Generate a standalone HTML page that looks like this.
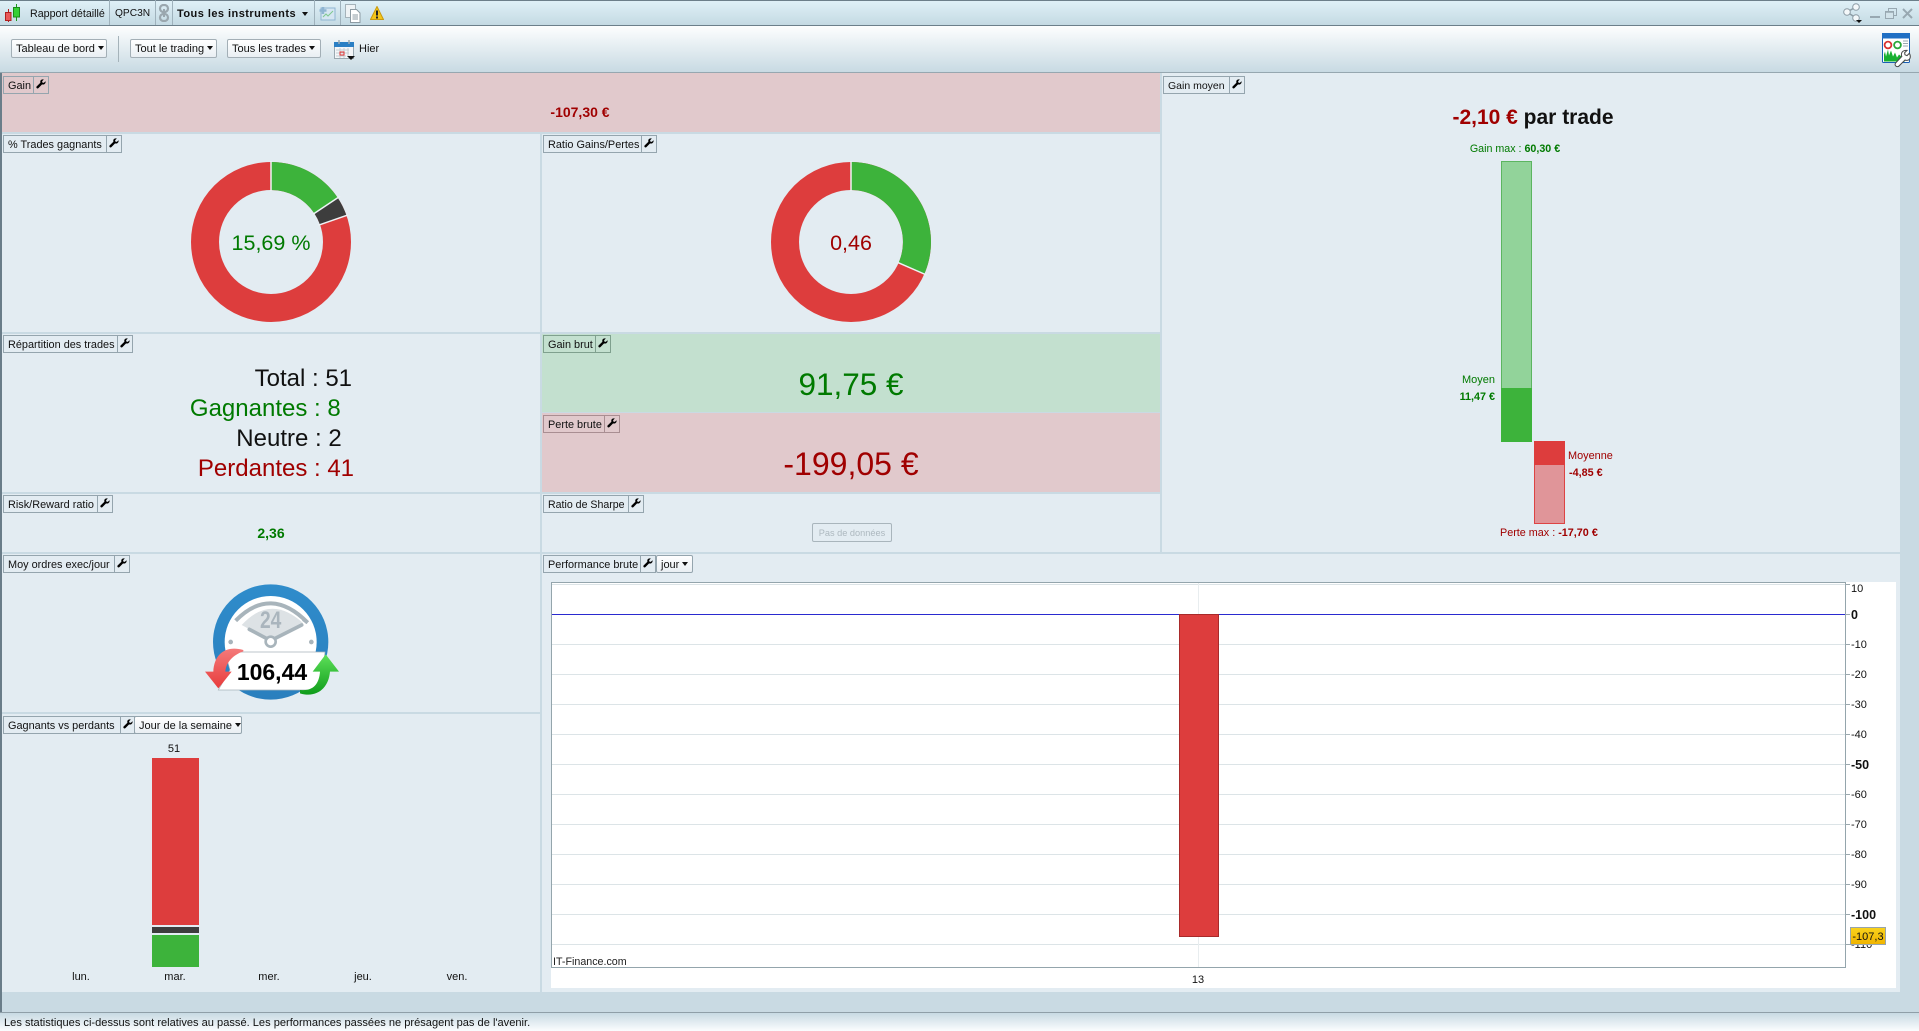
<!DOCTYPE html>
<html><head><meta charset="utf-8"><style>
html,body{margin:0;padding:0}
body{width:1919px;height:1031px;overflow:hidden;position:relative;background:#c9dae3;font:11px "Liberation Sans",sans-serif;color:#111}
div,span.a{position:absolute;box-sizing:border-box}
.x{position:absolute;white-space:nowrap;line-height:16px}
.c{text-align:center}
.p{background:#e3ecf2}
.t{position:absolute;height:18px;border:1px solid #95a5ae;line-height:18px;white-space:nowrap;padding-left:4px;font-size:10.900px}
.w{position:absolute;top:-1px;height:18px;border:1px solid #95a5ae;width:16px;background:transparent}
.w svg{position:absolute;left:2px;top:2px}
.b{position:absolute;height:19px;border:1px solid #a3afb6;border-radius:2px;background:linear-gradient(#fff,#e9eff3);line-height:19px;white-space:nowrap;padding-left:4px;font-size:11px}
.ar{display:inline-block;width:0;height:0;border:3.500px solid transparent;border-top:4px solid #111;border-bottom:0;vertical-align:2px;margin-left:3px}
.s{position:absolute;top:0;width:1px;height:25px;background:#9fb2bc}
.g{position:absolute;left:552px;width:1293px;height:1px;background:#dce4e7}
.l{position:absolute;left:1851px;width:40px;line-height:16px}
.lb{font-weight:bold;font-size:12.500px}
.k{position:absolute;left:1845px;width:5px;height:1px;background:#9aa8ae}
.gr{color:#007a00}.rd{color:#a00000}
.big{font-size:24px;line-height:28px}
</style></head><body>
<svg width="0" height="0" style="position:absolute"><defs><path id="wr" d="M9.500 2.200 7.800 3.900 6.400 3.600 6.100 2.200 7.800.5C6.300 0 4.600.6 4.300 2.200c-.1.6 0 1.100.1 1.500L.7 7.400c-.5.5-.5 1.200 0 1.700s1.200.5 1.700 0l3.700-3.700c.5.2 1 .2 1.500.1 1.500-.4 2.300-2 1.900-3.300z"/></defs></svg>

<!-- left strip -->
<div style="left:0;top:25px;width:2px;height:988px;background:#6a7d89"></div>

<!-- top bar -->
<div style="left:0;top:0;width:1919px;height:26px;background:linear-gradient(#dff0f7,#c4dae3);border-top:1px solid #6c7f8a;border-bottom:1px solid #6c7f8a"></div>
<svg style="position:absolute;left:4px;top:4px" width="18" height="18" viewBox="0 0 18 18"><path d="M4.500 5v13" stroke="#b02020"/><rect x="1.500" y="8.500" width="5.500" height="8" fill="#e85a5a" stroke="#b02020"/><path d="M12.500 0v17" stroke="#1a9a1a"/><rect x="9.500" y="3.500" width="6" height="9.500" fill="#35d035" stroke="#1a8a1a"/></svg>
<div class="x" style="left:30px;top:6px;font-size:10.700px">Rapport détaillé</div>
<div class="s" style="left:109px"></div>
<div class="x" style="left:115px;top:6px;font-size:10.200px">QPC3N</div>
<div class="s" style="left:155px"></div>
<svg style="position:absolute;left:157px;top:4px" width="14" height="18" viewBox="0 0 14 18"><rect x="3" y="1" width="8" height="7" rx="3.500" fill="none" stroke="#9aa7ae" stroke-width="2.200"/><rect x="3" y="10" width="8" height="7" rx="3.500" fill="none" stroke="#9aa7ae" stroke-width="2.200"/><path d="M7 5v8" stroke="#9aa7ae" stroke-width="2"/></svg>
<div class="s" style="left:172px"></div>
<div class="x" style="left:177px;top:6px;font-weight:bold;letter-spacing:.46px">Tous les instruments</div>
<div class="x" style="left:302px;top:12px;width:0;height:0;border:3.500px solid transparent;border-top:4px solid #111;border-bottom:0"></div>
<div class="s" style="left:314px"></div>
<svg style="position:absolute;left:319px;top:6px" width="17" height="15" viewBox="0 0 17 15"><rect x="2" y="2" width="14" height="12" fill="#d5e6f2" stroke="#8fb5d2"/><path d="M4 11l3-3 2 2 5-5" fill="none" stroke="#7fc88f"/><path d="M4 1v7M.5 4.500h7" stroke="#8fb5d2" stroke-width="2.500"/></svg>
<div class="s" style="left:340px"></div>
<svg style="position:absolute;left:345px;top:4px" width="16" height="19" viewBox="0 0 16 19"><rect x=".5" y=".5" width="10" height="13" fill="#eef3f5" stroke="#a5b3ba"/><path d="M5.500 5.500h6l3.500 3.500v9.500H5.500z" fill="#fff" stroke="#8d9ba3"/><path d="M7.500 11h5.500M7.500 13h5.500M7.500 15h5.500" stroke="#8d9ba3"/></svg>
<svg style="position:absolute;left:370px;top:6px" width="14" height="14" viewBox="0 0 14 14"><path d="M7 .5 13.500 13.500H.5z" fill="#f5c518" stroke="#c89a10"/><path d="M7 4.500v5" stroke="#222" stroke-width="2"/><path d="M7 10.500v2" stroke="#222" stroke-width="2"/></svg>
<svg style="position:absolute;left:1842px;top:3px" width="22" height="20" viewBox="0 0 22 20"><path d="M5 9 14 4M5 9l9 6" stroke="#8d9ca5" stroke-width="1.500"/><circle cx="5" cy="9" r="3.300" fill="#f4f8fa" stroke="#8d9ca5"/><circle cx="14" cy="4" r="3.300" fill="#f4f8fa" stroke="#8d9ca5"/><circle cx="14" cy="15" r="3.300" fill="#f4f8fa" stroke="#8d9ca5"/><path d="M14 17h6l-3 3z" fill="#111"/></svg>
<div style="left:1870px;top:16px;width:10px;height:2px;background:#98a8b1"></div>
<svg style="position:absolute;left:1885px;top:8px" width="12" height="11" viewBox="0 0 12 11"><rect x="3.500" y=".5" width="8" height="7" fill="none" stroke="#98a8b1"/><rect x=".5" y="3.500" width="8" height="7" fill="#d2e3ea" stroke="#98a8b1"/><path d="M1 4h7" stroke="#98a8b1" stroke-width="1.500"/></svg>
<svg style="position:absolute;left:1902px;top:8px" width="11" height="11" viewBox="0 0 11 11"><path d="M1 1l9 9M10 1l-9 9" stroke="#98a8b1" stroke-width="2"/></svg>

<!-- toolbar -->
<div style="left:0;top:26px;width:1919px;height:47px;background:linear-gradient(#fdfefe,#c8dae3);border-bottom:1px solid #96a7b0"></div>
<div class="b" style="left:11px;top:39px;width:96px">Tableau de bord<span class="ar"></span></div>
<div style="left:118px;top:36px;width:1px;height:26px;background:#a5b3ba"></div>
<div class="b" style="left:130px;top:39px;width:87px">Tout le trading<span class="ar"></span></div>
<div class="b" style="left:227px;top:39px;width:94px">Tous les trades<span class="ar"></span></div>
<svg style="position:absolute;left:334px;top:39px" width="21" height="21" viewBox="0 0 21 21"><rect x=".5" y="3.500" width="19" height="16" fill="#f4f6f8" stroke="#9aa8b0"/><rect x="0" y="3" width="20" height="5" fill="#2a7fc4"/><path d="M5 1v4M15 1v4" stroke="#9aa8b0" stroke-width="1.500"/><path d="M2 11h13M2 14h13M2 17h10M6 9v10M10 9v10M14 9v8" stroke="#c5ced3"/><rect x="6" y="13" width="4" height="3" fill="none" stroke="#e03030"/><path d="M13 17h8l-4 4z" fill="#111"/></svg>
<div class="x" style="left:359px;top:41px">Hier</div>
<svg style="position:absolute;left:1882px;top:33px;overflow:visible" width="30" height="31" viewBox="0 0 30 31"><rect x=".5" y=".5" width="27" height="29" rx="1" fill="#fff" stroke="#1a5fb4"/><rect x="0" y="0" width="28" height="5.500" fill="#1f6fc4"/><circle cx="6" cy="12" r="3.400" fill="none" stroke="#d83030" stroke-width="1.800"/><circle cx="15.500" cy="12" r="3.400" fill="none" stroke="#28a838" stroke-width="1.800"/><path d="M21 8h5M21 10.500h5M21 13h5" stroke="#9aa8b0"/><path d="M2 28.500v-7l1-3 1 5 2-7 1 6 2-5 2 6 2-4 2 5 2-3 6 5v2z" fill="#18b030"/><g transform="translate(3.400 10.600) scale(.8)"><path d="M30 12l-3 3-2.500-1-.5-2.500 3-3C23 8 20 10 20 14c0 1 .2 1.500.5 2L13 24c-1.200 1.200-1.200 3 0 4s3 1.200 4 0l7.500-7.500c.5.3 1 .5 2 .5 4 0 6-4 3.500-9z" fill="#fff" stroke="#4a4a4a" stroke-width="1.300"/></g></svg>

<!-- panels -->
<div class="p" style="left:2px;top:73px;width:1158px;height:59px;background:#e1c9cc"></div>
<div class="p" style="left:2px;top:134px;width:538px;height:198px"></div>
<div class="p" style="left:542px;top:134px;width:618px;height:198px"></div>
<div class="p" style="left:2px;top:334px;width:538px;height:158px"></div>
<div class="p" style="left:542px;top:334px;width:618px;height:78px;background:#c3e0cf"></div>
<div class="p" style="left:542px;top:413px;width:618px;height:79px;background:#e1c9cc"></div>
<div class="p" style="left:2px;top:494px;width:538px;height:58px"></div>
<div class="p" style="left:542px;top:494px;width:618px;height:58px"></div>
<div class="p" style="left:1162px;top:73px;width:738px;height:479px"></div>
<div class="p" style="left:2px;top:554px;width:538px;height:158px"></div>
<div class="p" style="left:2px;top:714px;width:538px;height:278px"></div>
<div class="p" style="left:542px;top:554px;width:1358px;height:438px"></div>

<!-- tags -->
<div class="t" style="left:3px;top:76px;width:46px">Gain<div class="w" style="left:29px"><svg width="10" height="10"><use href="#wr"/></svg></div></div>
<div class="t" style="left:3px;top:135px;width:119px">% Trades gagnants<div class="w" style="left:102px"><svg width="10" height="10"><use href="#wr"/></svg></div></div>
<div class="t" style="left:543px;top:135px;width:114px">Ratio Gains/Pertes<div class="w" style="left:97px"><svg width="10" height="10"><use href="#wr"/></svg></div></div>
<div class="t" style="left:3px;top:335px;width:130px">Répartition des trades<div class="w" style="left:113px"><svg width="10" height="10"><use href="#wr"/></svg></div></div>
<div class="t" style="left:543px;top:335px;width:68px;border-color:#7fa08e">Gain brut<div class="w" style="left:51px;border-color:#7fa08e"><svg width="10" height="10"><use href="#wr"/></svg></div></div>
<div class="t" style="left:543px;top:415px;width:77px;border-color:#a98e92">Perte brute<div class="w" style="left:60px;border-color:#a98e92"><svg width="10" height="10"><use href="#wr"/></svg></div></div>
<div class="t" style="left:3px;top:495px;width:110px">Risk/Reward ratio<div class="w" style="left:93px"><svg width="10" height="10"><use href="#wr"/></svg></div></div>
<div class="t" style="left:543px;top:495px;width:101px;font-size:10.600px">Ratio de Sharpe<div class="w" style="left:84px"><svg width="10" height="10"><use href="#wr"/></svg></div></div>
<div class="t" style="left:1163px;top:76px;width:82px;font-size:10.500px">Gain moyen<div class="w" style="left:65px"><svg width="10" height="10"><use href="#wr"/></svg></div></div>
<div class="t" style="left:3px;top:555px;width:127px">Moy ordres exec/jour<div class="w" style="left:110px"><svg width="10" height="10"><use href="#wr"/></svg></div></div>
<div class="t" style="left:3px;top:716px;width:132px">Gagnants vs perdants<div class="w" style="left:116px"><svg width="10" height="10"><use href="#wr"/></svg></div></div>
<div class="b" style="left:134px;top:716px;width:108px;height:18px;line-height:18px;border-color:#95a5ae">Jour de la semaine<span class="ar"></span></div>
<div class="t" style="left:543px;top:555px;width:113px">Performance brute<div class="w" style="left:96px"><svg width="10" height="10"><use href="#wr"/></svg></div></div>
<div class="b" style="left:656px;top:555px;width:37px;height:18px;line-height:18px;border-color:#95a5ae">jour<span class="ar"></span></div>

<!-- values -->
<div class="x c rd" style="left:480px;width:200px;top:104px;font-weight:bold;font-size:14px;line-height:16px">-107,30 €</div>

<!-- donuts -->
<svg style="position:absolute;left:190px;top:161px" width="162" height="162" viewBox="-81 -81 162 162">
<circle r="66" fill="none" stroke="#dd3d3d" stroke-width="28"/>
<path d="M0-80A80 80 0 0 1 66.700-44.200L43.300-28.700A52 52 0 0 0 0-52Z" fill="#3db33b"/>
<path d="M66.700-44.200A80 80 0 0 1 75.400-26.600L49-17.300A52 52 0 0 0 43.300-28.700Z" fill="#3d3d3d"/>
<path d="M0-81V-51M69-45.700 42-27.800M77-27.100 47.500-16.800" stroke="#eef3f6" stroke-width="1.500"/>
</svg>
<div class="x c gr" style="left:171px;width:200px;top:231px;font-size:21.500px;line-height:24px">15,69 %</div>
<svg style="position:absolute;left:770px;top:161px" width="162" height="162" viewBox="-81 -81 162 162">
<circle r="66" fill="none" stroke="#dd3d3d" stroke-width="28"/>
<path d="M0-80A80 80 0 0 1 73.300 32L47.600 20.800A52 52 0 0 0 0-52Z" fill="#3db33b"/>
<path d="M0-81V-51M75.500 33 46.700 20.400" stroke="#eef3f6" stroke-width="1.500"/>
</svg>
<div class="x c rd" style="left:751px;width:200px;top:231px;font-size:21.500px;line-height:24px">0,46</div>

<!-- Répartition -->
<div class="x big" style="left:100px;width:212px;top:365px;text-align:right">Total&nbsp;</div>
<div class="x big" style="left:312px;top:365px">: 51</div>
<div class="x big gr" style="left:100px;width:214px;top:395px;text-align:right">Gagnantes&nbsp;</div>
<div class="x big gr" style="left:314px;top:395px">: 8</div>
<div class="x big" style="left:100px;width:215px;top:425px;text-align:right">Neutre&nbsp;</div>
<div class="x big" style="left:315px;top:425px">: 2</div>
<div class="x big rd" style="left:100px;width:214px;top:455px;text-align:right">Perdantes&nbsp;</div>
<div class="x big rd" style="left:314px;top:455px">: 41</div>

<div class="x c gr" style="left:751px;width:200px;top:366px;font-size:31.500px;line-height:36px">91,75 €</div>
<div class="x c rd" style="left:751px;width:200px;top:446px;font-size:32px;line-height:36px">-199,05 €</div>
<div class="x c gr" style="left:171px;width:200px;top:525px;font-weight:bold;font-size:14px;line-height:16px">2,36</div>
<div class="c" style="left:812px;top:523px;width:80px;height:19px;border:1px solid #a9b5bc;border-radius:2px;line-height:18px;color:#adb8bf;font-size:9.200px;white-space:nowrap">Pas de données</div>

<!-- Gain moyen -->
<div class="x c" style="left:1383px;width:300px;top:106px;font-weight:bold;font-size:21px;line-height:24px"><span class="rd">-2,10 €</span> par trade</div>
<div class="x c gr" style="left:1415px;width:200px;top:141px;font-size:10.700px">Gain max : <b>60,30 €</b></div>
<div style="left:1501px;top:161px;width:31px;height:227px;background:#92d39a;border:1px solid #5cb560;border-bottom:0"></div>
<div style="left:1501px;top:388px;width:31px;height:54px;background:#3db33b"></div>
<div class="x gr" style="left:1395px;width:100px;top:372px;text-align:right">Moyen</div>
<div class="x gr" style="left:1395px;width:100px;top:389px;text-align:right;font-weight:bold;font-size:10.800px">11,47 €</div>
<div style="left:1534px;top:441px;width:31px;height:83px;background:#e09599;border:1px solid #dd4444"></div>
<div style="left:1534px;top:441px;width:31px;height:24px;background:#dd3d3d"></div>
<div class="x rd" style="left:1568px;top:448px;font-size:10.900px">Moyenne</div>
<div class="x rd" style="left:1569px;top:465px;font-weight:bold;font-size:10.800px">-4,85 €</div>
<div class="x rd" style="left:1500px;top:525px;font-size:10.800px">Perte max : <b>-17,70 €</b></div>

<!-- gauge -->
<svg style="position:absolute;left:180px;top:550px" width="180" height="160" viewBox="0 0 540 480">
<defs><linearGradient id="rg" x1="0" y1="0" x2="0" y2="1"><stop offset="0" stop-color="#2f8ccb"/><stop offset="1" stop-color="#2a7fbe"/></linearGradient>
<linearGradient id="ag" x1="0" y1="0" x2="0" y2="1"><stop offset="0" stop-color="#f47a7a"/><stop offset="1" stop-color="#e83c3c"/></linearGradient>
<linearGradient id="gg" x1="0" y1="0" x2="0" y2="1"><stop offset="0" stop-color="#5ee05a"/><stop offset="1" stop-color="#0f9c1a"/></linearGradient></defs>
<circle cx="272" cy="276" r="173" fill="url(#rg)"/>
<circle cx="272" cy="276" r="138" fill="#fff"/>
<path d="M272 272 185 225Q272 130 370 220Z" fill="#dde2e5"/>
<path d="M167 212Q272 105 383 218" fill="none" stroke="#a8b4bb" stroke-width="12"/>
<path d="M383 218l-14-10" stroke="#a8b4bb" stroke-width="10"/>
<text transform="translate(272 234) scale(.8 1)" text-anchor="middle" font-family="Liberation Sans" font-weight="bold" font-size="72" fill="#aab5bd">24</text>
<path d="M208 238 272 272M365 225 272 272" stroke="#a8b4bb" stroke-width="11" stroke-linecap="round"/>
<circle cx="272" cy="275" r="15" fill="#fff" stroke="#a8b4bb" stroke-width="8"/>
<circle cx="152" cy="276" r="7" fill="#a8b4bb"/><circle cx="394" cy="276" r="7" fill="#a8b4bb"/>
<path d="M135 306H435L420 420H115L150 360Z" fill="#fff" stroke="#a8b4bb" stroke-width="2"/>
<path d="M190 300C140 285 102 310 100 365H75L115 415 155 365H136C138 338 158 315 190 304Z" fill="url(#ag)"/>
<path d="M360 420C405 425 418 395 420 365H398L437 313 477 365H450C446 415 410 445 360 430Z" fill="url(#gg)"/>
<text x="276" y="390" text-anchor="middle" font-family="Liberation Sans" font-weight="bold" font-size="69" fill="#000">106,44</text>
</svg>

<!-- day chart -->
<div class="x c" style="left:124px;width:100px;top:741px;font-size:11px">51</div>
<div style="left:152px;top:758px;width:47px;height:167px;background:#dd3d3d"></div>
<div style="left:152px;top:927px;width:47px;height:6px;background:#3d3d3d"></div>
<div style="left:152px;top:935px;width:47px;height:32px;background:#3db33b"></div>
<div class="x c" style="left:51px;width:60px;top:969px">lun.</div>
<div class="x c" style="left:145px;width:60px;top:969px">mar.</div>
<div class="x c" style="left:239px;width:60px;top:969px">mer.</div>
<div class="x c" style="left:333px;width:60px;top:969px">jeu.</div>
<div class="x c" style="left:427px;width:60px;top:969px">ven.</div>

<!-- performance chart -->
<div style="left:551px;top:582px;width:1345px;height:406px;background:#fff"></div>
<div style="left:551px;top:582px;width:1295px;height:386px;border:1px solid #94a5ac"></div>
<div class="g" style="top:584px"></div>
<div class="g" style="top:644px"></div><div class="g" style="top:674px"></div><div class="g" style="top:704px"></div><div class="g" style="top:734px"></div><div class="g" style="top:764px"></div><div class="g" style="top:794px"></div><div class="g" style="top:824px"></div><div class="g" style="top:854px"></div><div class="g" style="top:884px"></div><div class="g" style="top:914px"></div><div class="g" style="top:944px"></div>
<div style="left:1198px;top:583px;width:1px;height:384px;background:#e8edef"></div>
<div style="left:552px;top:614px;width:1293px;height:1px;background:#2a2ad0"></div>
<div style="left:1179px;top:614px;width:40px;height:323px;background:#dd3d3d;border:1px solid #a82a2a"></div>
<div class="k" style="top:584px"></div><div class="k" style="top:614px"></div><div class="k" style="top:644px"></div><div class="k" style="top:674px"></div><div class="k" style="top:704px"></div><div class="k" style="top:734px"></div><div class="k" style="top:764px"></div><div class="k" style="top:794px"></div><div class="k" style="top:824px"></div><div class="k" style="top:854px"></div><div class="k" style="top:884px"></div><div class="k" style="top:914px"></div><div class="k" style="top:944px"></div>
<div class="l" style="top:581px">10</div>
<div class="l lb" style="top:607px">0</div>
<div class="l" style="top:637px">-10</div>
<div class="l" style="top:667px">-20</div>
<div class="l" style="top:697px">-30</div>
<div class="l" style="top:727px">-40</div>
<div class="l lb" style="top:757px">-50</div>
<div class="l" style="top:787px">-60</div>
<div class="l" style="top:817px">-70</div>
<div class="l" style="top:847px">-80</div>
<div class="l" style="top:877px">-90</div>
<div class="l lb" style="top:907px">-100</div>
<div class="l" style="top:937px">-110</div>
<div class="c" style="left:1850px;top:927px;width:36px;height:18px;background:linear-gradient(#f9d21c,#f0b400);border:1px solid #98a4aa;line-height:18px;white-space:nowrap">-107,3</div>
<div class="x" style="left:553px;top:954px;color:#222;font-size:10.700px">IT-Finance.com</div>
<div class="x c" style="left:1168px;width:60px;top:972px;font-size:11px">13</div>

<!-- status bar -->
<div style="left:0;top:1012px;width:1919px;height:19px;background:linear-gradient(#c8dae3,#fbfdfe);border-top:1px solid #8f9fa8"></div>
<div class="x" style="left:4px;top:1015px;font-size:11.080px">Les statistiques ci-dessus sont relatives au passé. Les performances passées ne présagent pas de l'avenir.</div>
</body></html>
